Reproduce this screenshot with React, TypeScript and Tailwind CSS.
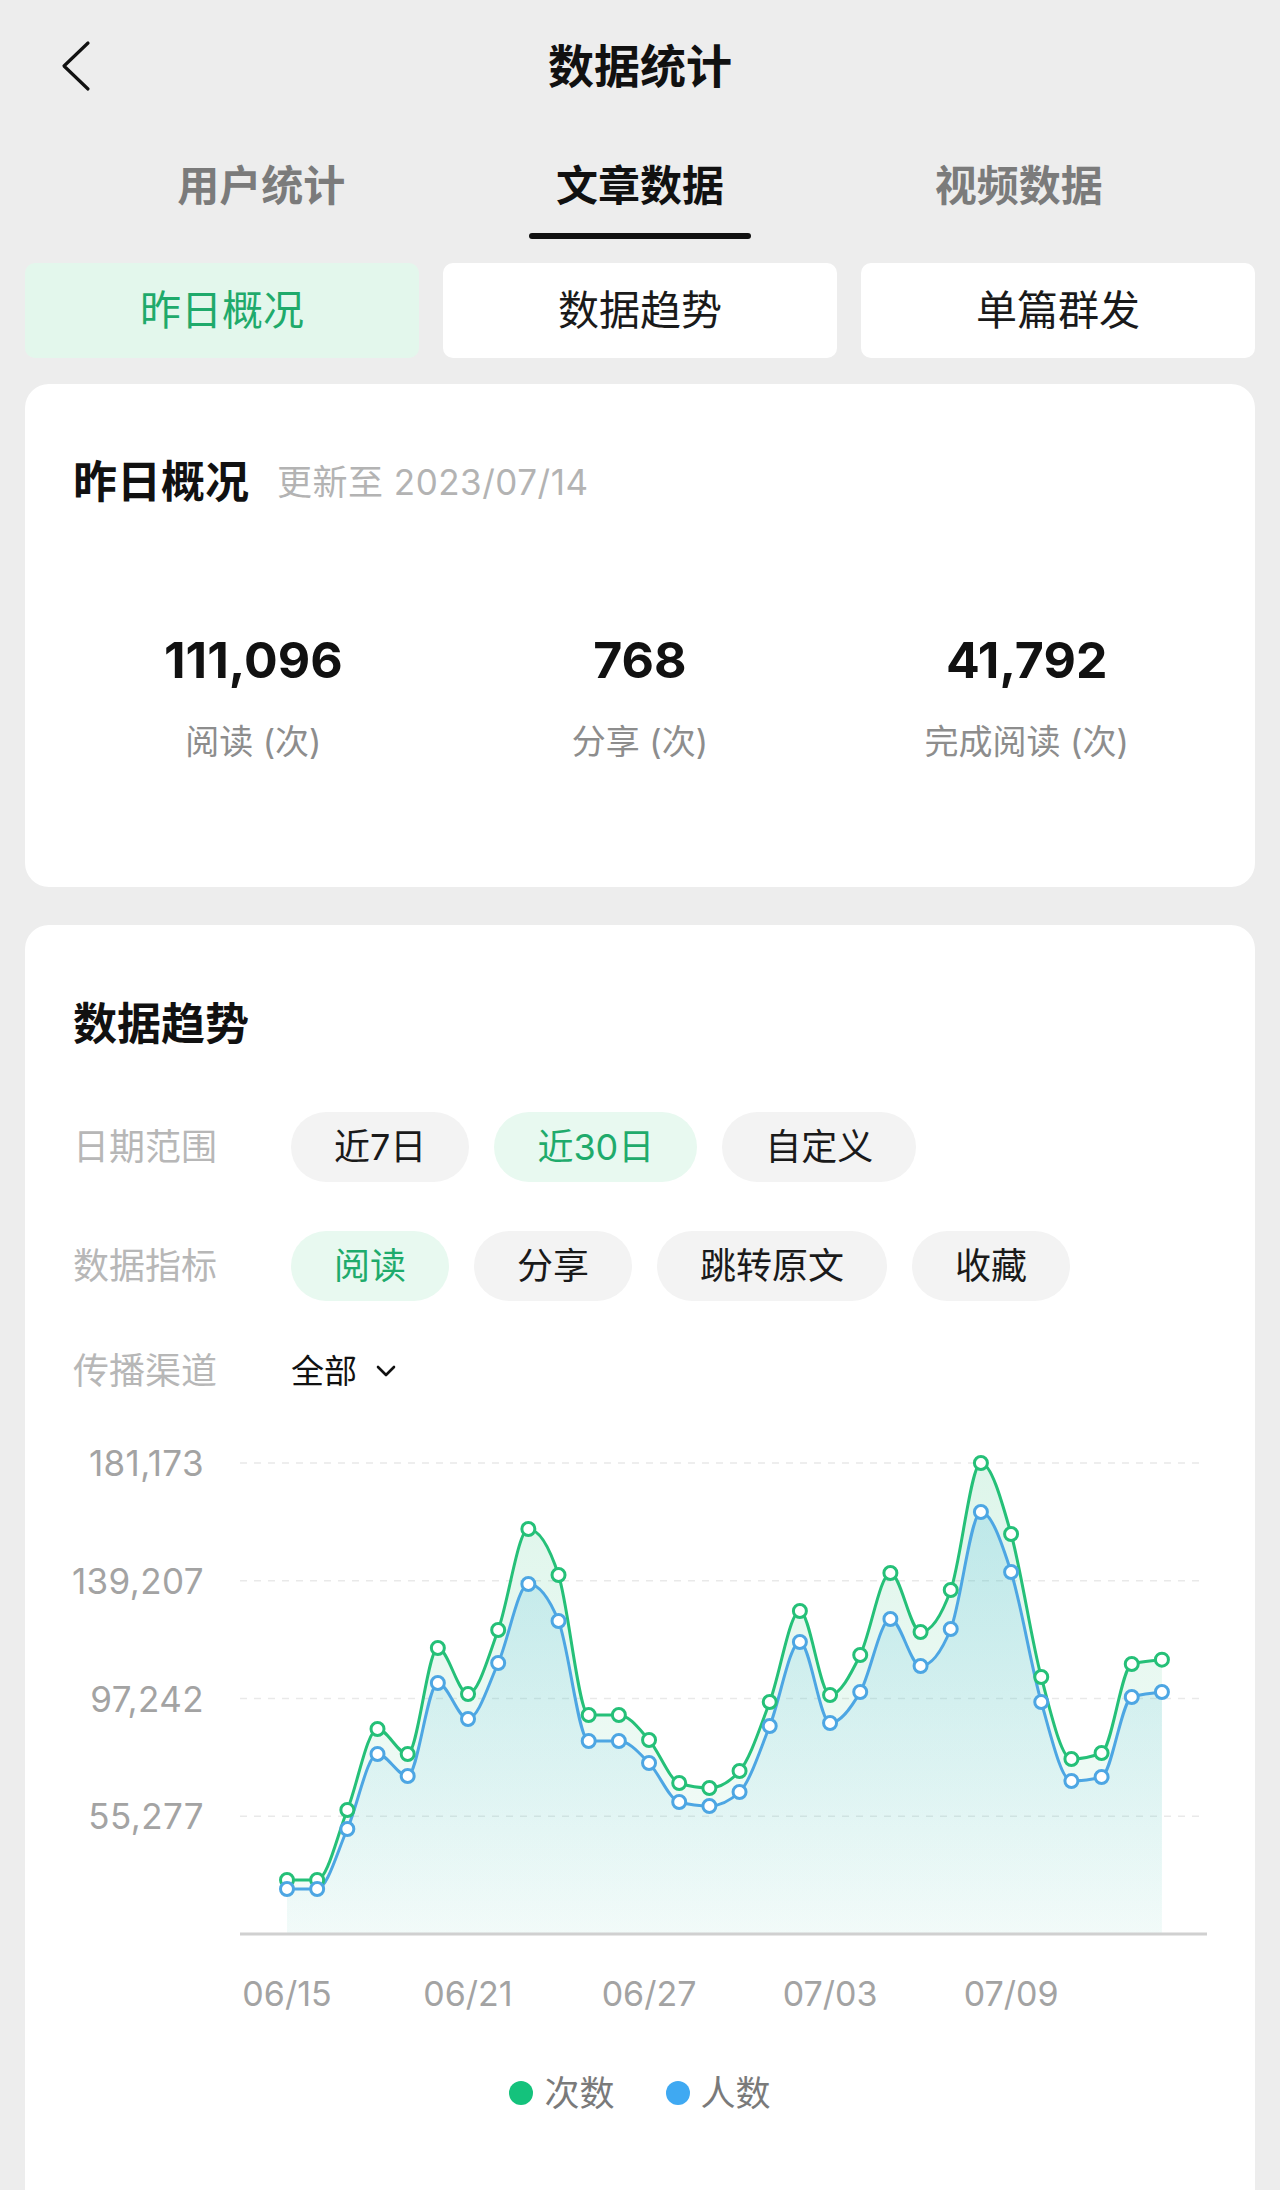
import React from "react";

const reads = [
  32558, 32558, 57506, 86374, 77464, 115242, 98848, 121658, 157654, 141260,
  91364, 91364, 82454, 67128, 65346, 71405, 95997, 128429, 98492, 112748,
  141972, 120945, 135914, 181173, 155872, 104907, 75682, 77820, 109540, 111096,
];
const readers = [
  29350, 29350, 50734, 77464, 69623, 102768, 89938, 109896, 138052, 124865,
  82097, 82097, 74256, 60357, 58931, 63921, 87443, 117381, 88512, 99561,
  125578, 108827, 122014, 163713, 142329, 95997, 67841, 69267, 97779, 99561,
];

const yTicks = [181173, 139207, 97242, 55277];
const xTicks = ["06/15", "06/21", "06/27", "07/03", "07/09"];

// plot area in page coordinates (svg viewBox matches the page)
const X0 = 287;
const STEP = 30.17;
const TOP = 1463;
const BOTTOM = 1934;
const MIN = 13312;
const MAX = 181173;

const px = (i: number) => X0 + STEP * i;
const py = (v: number) => BOTTOM - ((v - MIN) / (MAX - MIN)) * (BOTTOM - TOP);

function smoothPath(values: number[]) {
  const pts = values.map((v, i) => [px(i), py(v)] as const);
  const n = pts.length;
  const m: number[] = [];
  for (let i = 0; i < n - 1; i++) {
    m.push((pts[i + 1][1] - pts[i][1]) / (pts[i + 1][0] - pts[i][0]));
  }
  const t: number[] = [];
  for (let i = 0; i < n; i++) {
    if (i === 0) t.push(m[0]);
    else if (i === n - 1) t.push(m[n - 2]);
    else {
      const s0 = m[i - 1];
      const s1 = m[i];
      const p = (s0 + s1) / 2;
      t.push((Math.sign(s0) + Math.sign(s1)) * Math.min(Math.abs(s0), Math.abs(s1), 0.5 * Math.abs(p)) || 0);
    }
  }
  let d = `M${pts[0][0]},${pts[0][1]}`;
  for (let i = 0; i < n - 1; i++) {
    const [x0, y0] = pts[i];
    const [x1, y1] = pts[i + 1];
    const h = (x1 - x0) / 3;
    d += ` C${x0 + h},${y0 + t[i] * h} ${x1 - h},${y1 - t[i + 1] * h} ${x1},${y1}`;
  }
  return d;
}

function areaPath(values: number[]) {
  const last = px(values.length - 1);
  return `${smoothPath(values)} L${last},${BOTTOM} L${X0},${BOTTOM} Z`;
}

function TrendChart() {
  return (
    <svg width={1230} height={610} viewBox="25 1420 1230 610" className="block">
      <defs>
        <linearGradient id="gArea" x1="0" y1="0" x2="0" y2="1">
          <stop offset="0%" stopColor="#2cc27d" stopOpacity={0.16} />
          <stop offset="100%" stopColor="#2cc27d" stopOpacity={0.04} />
        </linearGradient>
        <linearGradient id="bArea" x1="0" y1="0" x2="0" y2="1">
          <stop offset="0%" stopColor="#5cc0e0" stopOpacity={0.26} />
          <stop offset="100%" stopColor="#5cc0e0" stopOpacity={0.03} />
        </linearGradient>
      </defs>

      {yTicks.map((v) => (
        <g key={v}>
          <line x1={240} x2={1204} y1={py(v)} y2={py(v)} stroke="#e9e9e9" strokeWidth={1.5} strokeDasharray="7 7" />
          <text
            x={204}
            y={py(v)}
            textAnchor="end"
            dominantBaseline="central"
            fontSize={35}
            letterSpacing={0.4}
            fill="#a3a3a3"
            fontFamily="Inter, 'Noto Sans CJK SC', sans-serif"
          >
            {v.toLocaleString("en-US")}
          </text>
        </g>
      ))}

      <path d={areaPath(reads)} fill="url(#gArea)" />
      <path d={areaPath(readers)} fill="url(#bArea)" />
      <path d={smoothPath(reads)} fill="none" stroke="#25c078" strokeWidth={3} />
      <path d={smoothPath(readers)} fill="none" stroke="#4da6e3" strokeWidth={3} />

      {reads.map((v, i) => (
        <circle key={"r" + i} cx={px(i)} cy={py(v)} r={6.5} fill="#fff" stroke="#25c078" strokeWidth={3} />
      ))}
      {readers.map((v, i) => (
        <circle key={"p" + i} cx={px(i)} cy={py(v)} r={6.5} fill="#fff" stroke="#4da6e3" strokeWidth={3} />
      ))}

      <line x1={240} x2={1207} y1={BOTTOM} y2={BOTTOM} stroke="#d0d0d0" strokeWidth={3} />

      {xTicks.map((label, k) => (
        <text
          key={label}
          x={px(k * 6)}
          y={1993}
          textAnchor="middle"
          dominantBaseline="central"
          fontSize={34}
          fill="#a3a3a3"
          fontFamily="Inter, 'Noto Sans CJK SC', sans-serif"
        >
          {label}
        </text>
      ))}
    </svg>
  );
}

function Chip({ label, active }: { label: string; active?: boolean }) {
  return (
    <div
      className={
        active
          ? "h-[70px] px-[43px] rounded-full flex items-center bg-[#e8f9f0] text-[#1fab6c] text-[36px]"
          : "h-[70px] px-[43px] rounded-full flex items-center bg-[#f3f3f3] text-[#1a1a1a] text-[36px]"
      }
    >
      {label}
    </div>
  );
}

function FilterRow({ label, children, className }: { label: string; children: React.ReactNode; className?: string }) {
  return (
    <div className={"flex items-center pl-[48px] " + (className ?? "")}>
      <div className="w-[218px] shrink-0 text-[36px] text-[#b7b7b7] leading-[50px]">{label}</div>
      <div className="flex items-center gap-[25px]">{children}</div>
    </div>
  );
}

export default function App() {
  const tabs = ["用户统计", "文章数据", "视频数据"];
  const subTabs = ["昨日概况", "数据趋势", "单篇群发"];
  const stats = [
    { value: "111,096", label: "阅读 (次)" },
    { value: "768", label: "分享 (次)" },
    { value: "41,792", label: "完成阅读 (次)" },
  ];

  return (
    <div className="h-[2190px] overflow-hidden bg-[#ededed] flex flex-col font-['Inter','Noto_Sans_CJK_SC',sans-serif] text-[#111]">
      {/* nav bar */}
      <div className="h-[132px] grid grid-cols-[1fr_auto_1fr] items-center">
        <div className="pl-[60px]">
          <svg width="32" height="52" viewBox="0 0 32 52" fill="none" stroke="#111" strokeWidth="3.2" strokeLinecap="round" strokeLinejoin="round">
            <path d="M28 3 L4 26 L28 49" />
          </svg>
        </div>
        <h1 className="text-[46px] font-bold leading-[60px]">数据统计</h1>
        <div />
      </div>

      {/* top tabs */}
      <div className="grid grid-cols-3 px-[72px]">
        {tabs.map((t, i) => (
          <div key={t} className="flex flex-col items-center pt-[26px]">
            <span
              className={
                i === 1
                  ? "text-[42px] leading-[56px] font-bold text-[#111]"
                  : "text-[42px] leading-[56px] font-semibold text-[#7b7b7b]"
              }
            >
              {t}
            </span>
            <div className={i === 1 ? "mt-[19px] h-[6px] w-[222px] rounded-full bg-[#111]" : "mt-[19px] h-[6px]"} />
          </div>
        ))}
      </div>

      {/* sub tabs */}
      <div className="flex gap-[24px] px-[25px] mt-[24px]">
        {subTabs.map((t, i) => (
          <div
            key={t}
            className={
              i === 0
                ? "flex-1 h-[95px] rounded-[10px] flex items-center justify-center text-[41px] bg-[#e3f7ec] text-[#1faa6b]"
                : "flex-1 h-[95px] rounded-[10px] flex items-center justify-center text-[41px] bg-white text-[#1a1a1a]"
            }
          >
            {t}
          </div>
        ))}
      </div>

      {/* yesterday overview */}
      <div className="mx-[25px] mt-[26px] rounded-[24px] bg-white px-[35px] pt-[68px] pb-[123px]">
        <div className="flex items-center pl-[13px] gap-[28px]">
          <h2 className="text-[44px] font-bold leading-[60px]">昨日概况</h2>
          <span className="text-[35px] tracking-[0.5px] text-[#b3b3b3]">更新至 2023/07/14</span>
        </div>
        <div className="grid grid-cols-3 mt-[118px]">
          {stats.map((s) => (
            <div key={s.label} className="flex flex-col items-center">
              <span className="text-[50px] font-bold leading-[60px] text-[#111]">{s.value}</span>
              <span className="mt-[30px] text-[34px] leading-[44px] text-[#8d8d8d]">{s.label}</span>
            </div>
          ))}
        </div>
      </div>

      {/* trend */}
      <div className="mx-[25px] mt-[38px] flex-1 rounded-t-[24px] bg-white pt-[69px]">
        <h2 className="pl-[48px] text-[44px] font-bold leading-[60px]">数据趋势</h2>

        <FilterRow label="日期范围" className="mt-[58px]">
          <Chip label="近7日" />
          <Chip label="近30日" active />
          <Chip label="自定义" />
        </FilterRow>

        <FilterRow label="数据指标" className="mt-[49px]">
          <Chip label="阅读" active />
          <Chip label="分享" />
          <Chip label="跳转原文" />
          <Chip label="收藏" />
        </FilterRow>

        <FilterRow label="传播渠道" className="mt-[45px]">
          <div className="flex items-center gap-[19px] text-[33px] leading-[50px] text-[#111]">
            全部
            <svg width="20" height="12" viewBox="0 0 20 12" fill="none" stroke="#111" strokeWidth="2.6" strokeLinecap="round" strokeLinejoin="round">
              <path d="M2 2 L10 10 L18 2" />
            </svg>
          </div>
        </FilterRow>

        <div className="mt-[24px]">
          <TrendChart />
        </div>

        <div className="mt-[41px] flex justify-center items-center text-[35px] leading-[44px] text-[#7a7a7a]">
          <span className="w-[24px] h-[24px] rounded-full bg-[#14c27c]" />
          <span className="ml-[11px]">次数</span>
          <span className="ml-[51px] w-[24px] h-[24px] rounded-full bg-[#3fa9f2]" />
          <span className="ml-[11px]">人数</span>
        </div>
      </div>
    </div>
  );
}
